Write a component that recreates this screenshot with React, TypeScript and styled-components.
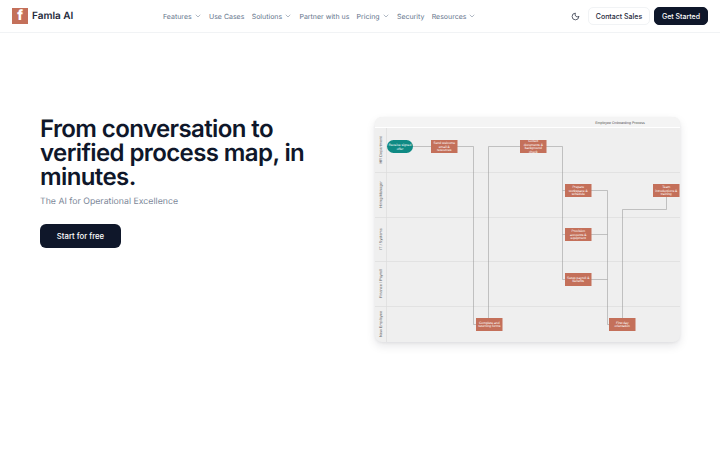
import React from 'react';
import styled, { createGlobalStyle } from 'styled-components';
import { ChevronDown, Moon } from 'lucide-react';

const GlobalStyle = createGlobalStyle`
    html, body {
        margin: 0;
        padding: 0;
        background: #ffffff;
        font-family: Inter, "Liberation Sans", sans-serif;
        color: #0f172a;
        text-rendering: geometricPrecision;
    }
    * {
        box-sizing: border-box;
    }
`;

const Page = styled.div`
    width: 720px;
    height: 450px;
    overflow: hidden;
    background: #ffffff;
`;

const Header = styled.header`
    height: 33px;
    display: flex;
    align-items: center;
    padding: 0 12px;
    border-bottom: 1px solid #f1f3f5;
`;

const Brand = styled.div`
    display: flex;
    align-items: center;
    gap: 4px;
    width: 151px;
`;

const LogoMark = styled.span`
    width: 16px;
    height: 16px;
    display: flex;
    align-items: center;
    justify-content: center;
    background: #c4705a;
    color: #ffffff;
    font-size: 14px;
    font-weight: 800;
    line-height: 16px;
`;

const BrandName = styled.span`
    font-size: 10px;
    font-weight: 600;
    color: #1e293b;
`;

const Nav = styled.nav`
    display: flex;
    align-items: center;
    gap: 7.25px;
`;

const NavItem = styled.a`
    display: flex;
    align-items: center;
    gap: 2px;
    font-size: 7px;
    color: #64748b;
    white-space: nowrap;
`;

const Actions = styled.div`
    margin-left: auto;
    display: flex;
    align-items: center;
`;

const ThemeToggle = styled.button`
    width: 12px;
    height: 12px;
    padding: 0;
    margin-right: 7px;
    display: flex;
    align-items: center;
    justify-content: center;
    border: 0;
    background: none;
    color: #0f172a;
`;

const HeaderButton = styled.button<{ $primary?: boolean }>`
    height: 18px;
    width: ${(props) => (props.$primary ? '54px' : '62px')};
    padding: 0;
    margin-left: ${(props) => (props.$primary ? '4px' : '0')};
    border-radius: 5px;
    border: 1px solid ${(props) => (props.$primary ? '#0f172a' : '#f1f3f5')};
    background: ${(props) => (props.$primary ? '#0f172a' : '#ffffff')};
    color: ${(props) => (props.$primary ? '#ffffff' : '#1e293b')};
    font-family: inherit;
    font-size: 7px;
    font-weight: 500;
    white-space: nowrap;
`;

const Hero = styled.main`
    display: flex;
    justify-content: space-between;
    align-items: flex-start;
    padding: 84px 40px 0;
`;

const HeroText = styled.div`
    width: 280px;
`;

const Title = styled.h1`
    margin: 0;
    font-size: 24px;
    line-height: 24px;
    font-weight: 600;
    letter-spacing: -0.6px;
    color: #0f172a;
`;

const Subtitle = styled.p`
    margin: 5.5px 0 0;
    font-size: 8.75px;
    line-height: 14px;
    color: #7c8798;
`;

const StartButton = styled.button`
    display: block;
    width: 81px;
    height: 24px;
    margin-top: 15.5px;
    padding: 0;
    border: 0;
    border-radius: 6px;
    background: #0f172a;
    color: #ffffff;
    font-family: inherit;
    font-size: 7.75px;
    font-weight: 500;
`;

const DiagramFrame = styled.figure`
    width: 305px;
    height: 225px;
    margin: 0;
    overflow: hidden;
    border-radius: 7px;
    background: #efefef;
    box-shadow: 0 4px 10px rgba(15, 23, 42, 0.1), 0 1px 3px rgba(15, 23, 42, 0.06);
`;

const DiagramSvg = styled.svg`
    display: block;
    font-family: "Liberation Sans", sans-serif;
`;

const navItems = [
    { label: 'Features', menu: true },
    { label: 'Use Cases' },
    { label: 'Solutions', menu: true },
    { label: 'Partner with us' },
    { label: 'Pricing', menu: true },
    { label: 'Security' },
    { label: 'Resources', menu: true },
];

// page coords minus the frame origin (375, 117)
const lanes = [
    { label: 'HR Department', y: 11, h: 44 },
    { label: 'Hiring Manager', y: 55, h: 45 },
    { label: 'IT / Systems', y: 100, h: 44 },
    { label: 'Finance / Payroll', y: 144, h: 45 },
    { label: 'New Employee', y: 189, h: 36 },
];

const steps = [
    { x: 56, y: 23, lines: ['Send welcome', 'email &', 'resources'] },
    { x: 145, y: 23, lines: ['Collect', 'documents &', 'background', 'check'] },
    { x: 190, y: 67, lines: ['Prepare', 'workspace &', 'schedule'] },
    { x: 190, y: 111, lines: ['Provision', 'accounts &', 'equipment'] },
    { x: 190, y: 156, lines: ['Setup payroll &', 'benefits'] },
    { x: 101, y: 201, lines: ['Complete and', 'returning forms'] },
    { x: 234, y: 201, lines: ['First day', 'orientation'] },
    { x: 278, y: 67, lines: ['Team', 'introductions &', 'training'] },
];

const connectors = [
    'M38 29.5H56',
    'M82 29.5H98.5V207.5H101',
    'M145 29.5H113.5V201',
    'M171 29.5H187.5V162.5H190',
    'M187.5 73.5H190',
    'M187.5 117.5H190',
    'M216 73.5H232.5V207.5H234',
    'M216 117.5H232.5',
    'M216 162.5H232.5',
    'M247.5 201V92.5H291.5V80',
];

const ProcessDiagram: React.FC = () => (
    <DiagramSvg width="305" height="225" viewBox="0 0 305 225">
        <rect width="305" height="10" fill="#f4f4f4" />
        <line x1="0" y1="10.5" x2="305" y2="10.5" stroke="#ffffff" />
        <text x="245" y="6.8" fontSize="3.6" fill="#555555" textAnchor="middle">Employee Onboarding Process</text>
        {lanes.map((lane, i) => (
            <g key={lane.label}>
                {i > 0 && <line x1="0" y1={lane.y + 0.5} x2="305" y2={lane.y + 0.5} stroke="#dcdcdc" strokeWidth="0.7" />}
                <text
                    transform={`translate(7 ${lane.y + lane.h / 2}) rotate(-90)`}
                    fontSize="3.9"
                    fill="#666666"
                    textAnchor="middle"
                >
                    {lane.label}
                </text>
            </g>
        ))}
        <line x1="11.5" y1="11" x2="11.5" y2="225" stroke="#dddddd" strokeWidth="0.7" />
        {connectors.map((d) => (
            <path key={d} d={d} fill="none" stroke="#a0a0a0" strokeWidth="0.6" />
        ))}
        <rect x="12" y="23" width="26" height="13" rx="6.5" fill="#0f8a84" />
        <text fontSize="3.3" fill="#ffffff" textAnchor="middle">
            <tspan x="25" y="29">Receive signed</tspan>
            <tspan x="25" y="33">offer</tspan>
        </text>
        {steps.map((step) => (
            <g key={step.x + '-' + step.y}>
                <rect x={step.x} y={step.y} width="26.5" height="13" fill="#c4705a" />
                <text fontSize="3.3" fill="#ffffff" textAnchor="middle">
                    {step.lines.map((line, i) => (
                        <tspan
                            key={line}
                            x={step.x + 13.25}
                            y={step.y + 7.6 - ((step.lines.length - 1) * 3.6) / 2 + i * 3.6}
                        >
                            {line}
                        </tspan>
                    ))}
                </text>
            </g>
        ))}
    </DiagramSvg>
);

const App: React.FC = () => (
    <Page>
        <GlobalStyle />
        <Header>
            <Brand>
                <LogoMark>f</LogoMark>
                <BrandName>Famla AI</BrandName>
            </Brand>
            <Nav>
                {navItems.map((item) => (
                    <NavItem key={item.label}>
                        {item.label}
                        {item.menu && <ChevronDown size={8} strokeWidth={1.5} />}
                    </NavItem>
                ))}
            </Nav>
            <Actions>
                <ThemeToggle aria-label="Toggle theme">
                    <Moon size={9} strokeWidth={1.8} />
                </ThemeToggle>
                <HeaderButton>Contact Sales</HeaderButton>
                <HeaderButton $primary>Get Started</HeaderButton>
            </Actions>
        </Header>
        <Hero>
            <HeroText>
                <Title>From conversation to verified process map, in minutes.</Title>
                <Subtitle>The AI for Operational Excellence</Subtitle>
                <StartButton>Start for free</StartButton>
            </HeroText>
            <DiagramFrame>
                <ProcessDiagram />
            </DiagramFrame>
        </Hero>
    </Page>
);

export default App;
